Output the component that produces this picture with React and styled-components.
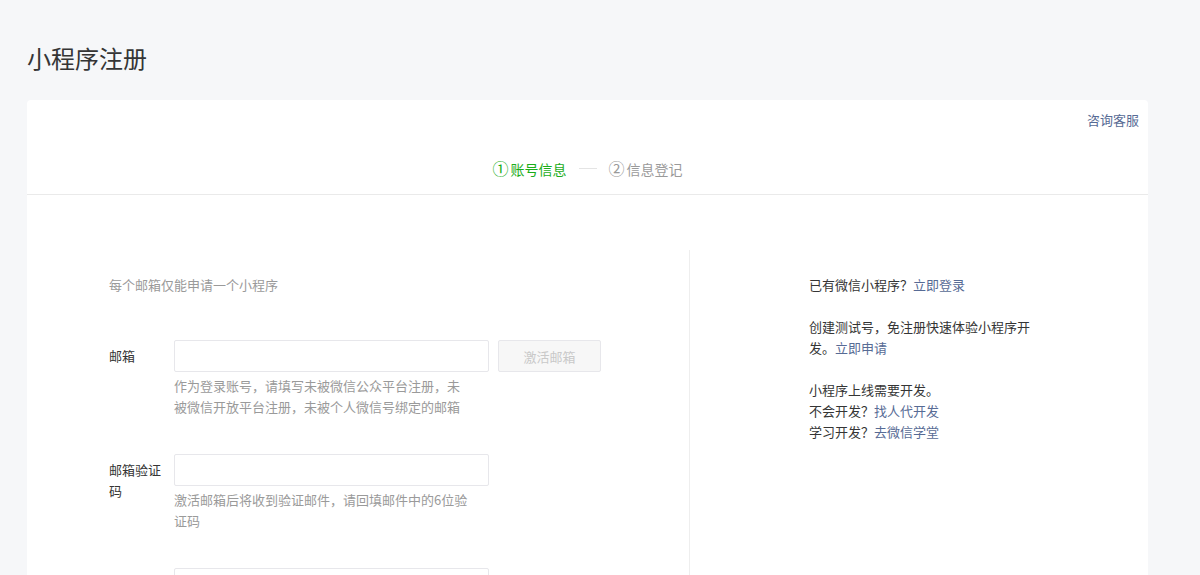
import React from 'react';
import styled, { createGlobalStyle } from 'styled-components';

const GlobalStyle = createGlobalStyle`
  body {
    margin: 0;
    background: #f6f7f9;
    font-family: 'Noto Sans CJK SC', 'Noto Sans', sans-serif;
    color: #353535;
  }
`;

const steps = [
  { num: '①', label: '账号信息', active: true },
  { num: '②', label: '信息登记', active: false },
];

const fields = [
  {
    label: '邮箱',
    tip: '作为登录账号，请填写未被微信公众平台注册，未被微信开放平台注册，未被个人微信号绑定的邮箱',
    action: '激活邮箱',
  },
  {
    label: '邮箱验证码',
    tip: '激活邮箱后将收到验证邮件，请回填邮件中的6位验证码',
  },
  { label: '密码', tip: '' },
];

const App = () => {
  return (
    <Page>
      <GlobalStyle />
      <Title>小程序注册</Title>
      <Card>
        <Header>
          <ServiceRow>
            <Link href="#">咨询客服</Link>
          </ServiceRow>
          <Steps>
            {steps.map((s, i) => (
              <React.Fragment key={s.label}>
                {i > 0 && <StepLine />}
                <Step $active={s.active}>
                  <span className="num">{s.num}</span>
                  {s.label}
                </Step>
              </React.Fragment>
            ))}
          </Steps>
        </Header>
        <Body>
          <FormColumn>
            <Notice>每个邮箱仅能申请一个小程序</Notice>
            {fields.map((f) => (
              <FormRow key={f.label}>
                <Label>{f.label}</Label>
                <Control>
                  <InputLine>
                    <Input />
                    {f.action && <ActionButton disabled>{f.action}</ActionButton>}
                  </InputLine>
                  {f.tip && <Tip>{f.tip}</Tip>}
                </Control>
              </FormRow>
            ))}
          </FormColumn>
          <SideColumn>
            <Para>
              已有微信小程序？<Link href="#">立即登录</Link>
            </Para>
            <Para>
              创建测试号，免注册快速体验小程序开发。<Link href="#">立即申请</Link>
            </Para>
            <Para>
              小程序上线需要开发。
              <br />
              不会开发？<Link href="#">找人代开发</Link>
              <br />
              学习开发？<Link href="#">去微信学堂</Link>
            </Para>
          </SideColumn>
        </Body>
      </Card>
    </Page>
  );
};

const Page = styled.div`
  padding: 36px 52px 0 27px;
  height: 575px;
  box-sizing: border-box;
  overflow: hidden;
`;

const Title = styled.h1`
  margin: 0 0 20px;
  font-size: 24px;
  line-height: 44px;
  font-weight: 400;
  color: #353535;
`;

const Card = styled.div`
  background: #fff;
  border-radius: 4px;
  min-height: 600px;
`;

const Header = styled.div`
  padding: 10px 9px 15px;
  border-bottom: 1px solid #eaeaea;
`;

const ServiceRow = styled.div`
  display: flex;
  justify-content: flex-end;
  font-size: 13px;
  line-height: 20px;
`;

const Link = styled.a`
  color: #576b95;
  text-decoration: none;
`;

const Steps = styled.div`
  display: flex;
  justify-content: center;
  align-items: center;
  margin-top: 28px;
  font-size: 14px;
  line-height: 20px;
`;

const Step = styled.div`
  color: ${(p) => (p.$active ? '#1aad19' : '#9a9a9a')};

  .num {
    margin-right: 2px;
    font-size: 16px;
  }
`;

const StepLine = styled.div`
  width: 18px;
  height: 1px;
  background: #e4e4e4;
  margin: 0 12px;
`;

const Body = styled.div`
  display: flex;
  margin-top: 55px;
`;

const FormColumn = styled.div`
  width: 663px;
  box-sizing: border-box;
  border-right: 1px solid #eeeeee;
  padding: 24px 0 0 82px;
`;

const Notice = styled.p`
  margin: 0 0 45px;
  font-size: 13px;
  line-height: 21px;
  color: #9a9a9a;
`;

const FormRow = styled.div`
  display: flex;
  margin-bottom: 37px;
`;

const Label = styled.label`
  width: 65px;
  flex-shrink: 0;
  box-sizing: border-box;
  padding: 5px 10px 0 0;
  font-size: 13px;
  line-height: 21px;
  color: #353535;
`;

const Control = styled.div`
  display: flex;
  flex-direction: column;
`;

const InputLine = styled.div`
  display: flex;
  gap: 9px;
`;

const Input = styled.input`
  width: 315px;
  height: 32px;
  box-sizing: border-box;
  border: 1px solid #e7e7eb;
  border-radius: 2px;
  outline: none;
`;

const ActionButton = styled.button`
  width: 103px;
  height: 32px;
  border: 1px solid #e7e7eb;
  border-radius: 2px;
  background: #f7f7f7;
  color: #c9c9c9;
  font-family: inherit;
  font-size: 13px;
`;

const Tip = styled.p`
  margin: 3px 0 0;
  width: 296px;
  font-size: 13px;
  line-height: 21px;
  color: #9a9a9a;
`;

const SideColumn = styled.div`
  padding: 24px 0 0 119px;
  width: 228px;
`;

const Para = styled.p`
  margin: 0 0 21px;
  font-size: 13px;
  line-height: 21px;
  color: #353535;
`;

export default App;
